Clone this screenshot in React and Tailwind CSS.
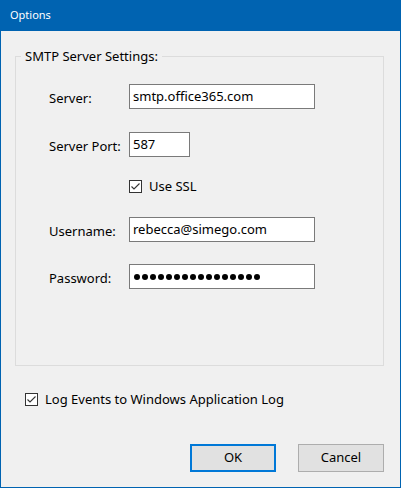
import clsx from "clsx";

// Windows-style "Options" dialog
function CheckBox() {
  return (
    <span className="flex h-[13px] w-[13px] shrink-0 items-center justify-center border border-[#333333] bg-white">
      <svg width="11" height="11" viewBox="0 0 11 11">
        <path d="M1.5 5.5 L4 8 L9.5 2.5" fill="none" stroke="#333333" strokeWidth="1.1" />
      </svg>
    </span>
  );
}

function Field({ label, boxClass, className, children }) {
  return (
    <div className={clsx("flex items-center", className)}>
      <span className="mt-[5px] w-[80px] shrink-0">{label}</span>
      <div className={clsx("flex h-[25px] items-center border border-[#7a7a7a] bg-white pl-[3px]", boxClass)}>
        {children}
      </div>
    </div>
  );
}

export default function App() {
  const dots = Array.from({ length: 16 });

  return (
    <div className="flex h-[488px] w-[401px] flex-col bg-[#0063b1] px-px pb-px font-['Noto_Sans',sans-serif] select-none">
      <div className="flex h-[31px] shrink-0 items-center pl-[9px] text-[11px] text-white">Options</div>

      <div className="flex flex-1 flex-col bg-[#f0f0f0] text-[13px] text-black">
        <fieldset className="mt-[17px] ml-[14px] h-[318px] w-[369px] border border-[#dcdcdc] pt-[19px]">
          <legend className="ml-[5px] px-[4px] leading-[17px]">SMTP Server Settings:</legend>

          <div className="flex flex-col pl-[33px]">
            <Field label="Server:" boxClass="w-[186px]">
              smtp.office365.com
            </Field>
            <Field label="Server Port:" boxClass="w-[61px]" className="mt-[23px]">
              587
            </Field>
            <div className="mt-[23px] flex h-[13px] items-center gap-[7px] pl-[80px]">
              <CheckBox />
              <span>Use SSL</span>
            </div>
            <Field label="Username:" boxClass="w-[186px]" className="mt-[24px]">
              rebecca@simego.com
            </Field>
            <Field label="Password:" boxClass="w-[186px]" className="mt-[22px]">
              <div className="flex gap-[2px] pl-px">
                {dots.map((_, i) => (
                  <span key={i} className="h-[6px] w-[6px] rounded-full bg-black" />
                ))}
              </div>
            </Field>
          </div>
        </fieldset>

        <div className="mt-[27px] ml-[24px] flex h-[13px] items-center gap-[7px]">
          <CheckBox />
          <span>Log Events to Windows Application Log</span>
        </div>

        <div className="mt-[38px] flex justify-end gap-[22px] pr-[16px]">
          <button
            type="button"
            className="flex h-[28px] w-[86px] items-center justify-center border-2 border-[#0078d7] bg-[#e1e1e1]"
          >
            OK
          </button>
          <button
            type="button"
            className="flex h-[28px] w-[86px] items-center justify-center border border-[#adadad] bg-[#e1e1e1]"
          >
            Cancel
          </button>
        </div>
      </div>
    </div>
  );
}
